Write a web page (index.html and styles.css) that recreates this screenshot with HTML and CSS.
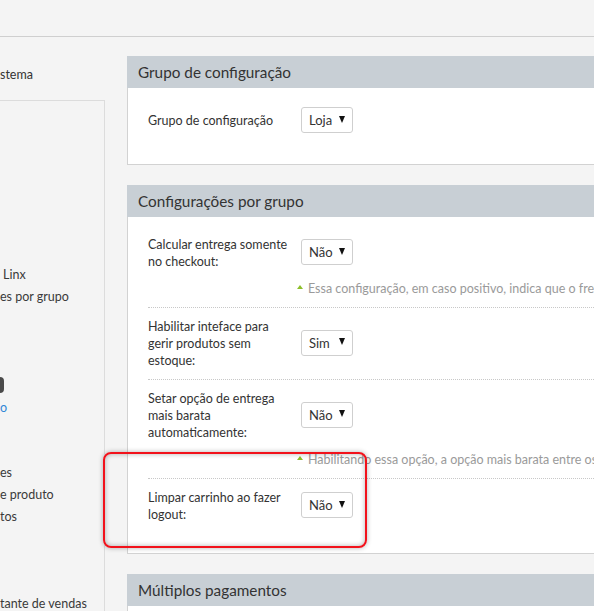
FILE: index.html
```html
<!DOCTYPE html>
<html lang="pt-BR">
<head>
<meta charset="utf-8">
<title>Configurações por grupo</title>
<link rel="stylesheet" href="styles.css">
</head>
<body>
<div class="topbar"></div>
<div class="layout">
  <aside class="side">
    <div class="side-title">stema</div>
    <div class="side-box">
      <div class="side-item i-linx">Linx</div>
      <div class="side-item">es por grupo</div>
      <div class="side-pill"></div>
      <div class="side-item side-link">o</div>
      <div class="side-item i-es">es</div>
      <div class="side-item">e produto</div>
      <div class="side-item">tos</div>
      <div class="side-item i-vendas">tante de vendas</div>
    </div>
  </aside>
  <main class="main">
    <section class="panel">
      <div class="panel-head">Grupo de configuração</div>
      <div class="panel-body single">
        <div class="label">Grupo de configuração</div>
        <div class="select"><span>Loja</span><span class="caret"></span></div>
      </div>
    </section>

    <section class="panel">
      <div class="panel-head">Configurações por grupo</div>
      <div class="panel-body rows">
        <div class="row">
          <div class="row-main">
            <div class="label">Calcular entrega somente no checkout:</div>
            <div class="select"><span>Não</span><span class="caret"></span></div>
          </div>
          <div class="hint"><span class="tri"></span>Essa configuração, em caso positivo, indica que o frete só será calculado no checkout.</div>
        </div>
        <div class="row">
          <div class="row-main">
            <div class="label">Habilitar inteface para gerir produtos sem estoque:</div>
            <div class="select"><span>Sim</span><span class="caret"></span></div>
          </div>
        </div>
        <div class="row">
          <div class="row-main">
            <div class="label">Setar opção de entrega mais barata automaticamente:</div>
            <div class="select"><span>Não</span><span class="caret"></span></div>
          </div>
          <div class="hint"><span class="tri"></span>Habilitando essa opção, a opção mais barata entre os fretes será selecionada.</div>
        </div>
        <div class="row">
          <div class="row-main">
            <div class="label">Limpar carrinho ao fazer logout:</div>
            <div class="select"><span>Não</span><span class="caret"></span></div>
          </div>
        </div>
      </div>
    </section>

    <section class="panel">
      <div class="panel-head">Múltiplos pagamentos</div>
      <div class="panel-body empty"></div>
    </section>
  </main>
</div>
<div class="highlight"></div>
</body>
</html>
```
FILE: styles.css
```css
html, body {
  margin: 0;
  padding: 0;
  overflow: hidden;
  background: #f4f4f4;
}
body {
  font-family: Lato, "Liberation Sans", sans-serif;
  font-size: 12.5px;
  color: #333;
  position: relative;
  height: 611px;
}
.topbar {
  height: 36px;
  border-bottom: 1px solid #cfcfcf;
}
.layout {
  display: flex;
  align-items: flex-start;
}
.side {
  width: 105px;
  flex: none;
}
.side-title {
  margin-top: 29px;
  line-height: 18px;
  margin-bottom: 16px;
  color: #333;
}
.side-box {
  width: 104px;
  height: 520px;
  border-top: 1px solid #dcdcdc;
  border-right: 1px solid #dcdcdc;
}
.side-item {
  line-height: 22px;
  white-space: nowrap;
  color: #3a3a3a;
}
.i-linx {
  margin-top: 163px;
  padding-left: 3px;
}
.side-pill {
  margin-top: 69px;
  width: 4px;
  height: 16px;
  background: #4a4a4a;
  border-radius: 0 4px 4px 0;
}
.side-link {
  margin-top: 4px;
  color: #2f86d6;
}
.i-es {
  margin-top: 43px;
}
.i-vendas {
  margin-top: 65px;
}
.main {
  margin-left: 22px;
  width: 620px;
  flex: none;
}
.panel {
  margin-top: 20px;
}
.panel:first-child {
  margin-top: 19px;
}
.panel-head {
  height: 32px;
  line-height: 32px;
  background: #c8cfd5;
  padding-left: 11px;
  font-size: 15.3px;
  color: #333;
}
.panel-body {
  background: #fff;
  border: 1px solid #d2d2d2;
  border-top: none;
}
.panel-body.single {
  display: flex;
  align-items: center;
  padding: 19px 20px 31px 20px;
}
.panel-body.single .select {
  margin-top: 0;
}
.panel-body.rows {
  padding: 9px 0 20px 20px;
}
.panel-body.empty {
  height: 40px;
}
.row {
  padding: 10px 0;
  border-bottom: 1px dotted #c8c8c8;
}
.row:last-child {
  border-bottom: none;
}
.row-main {
  display: flex;
  align-items: center;
}
.label {
  width: 145px;
  margin-right: 8px;
  line-height: 17px;
  flex: none;
}
.select {
  box-sizing: border-box;
  width: 52px;
  height: 26px;
  border: 1px solid #cfcfcf;
  border-radius: 3px;
  background: #fff;
  display: flex;
  align-items: center;
  justify-content: space-between;
  padding: 0 7px 0 7px;
  margin-top: -2px;
  color: #333;
  font-size: 13px;
}
.caret {
  width: 0;
  height: 0;
  border-left: 3.5px solid transparent;
  border-right: 3.5px solid transparent;
  border-top: 7px solid #111;
  margin-top: -2px;
}
.hint {
  margin-top: 10px;
  margin-left: 149px;
  line-height: 17px;
  color: #9a9a9a;
  white-space: nowrap;
  display: flex;
  align-items: center;
}
.tri {
  width: 0;
  height: 0;
  border-left: 3.5px solid transparent;
  border-right: 3.5px solid transparent;
  border-bottom: 4px solid #8dbf2a;
  margin-right: 5px;
  margin-top: -4px;
}
.highlight {
  position: absolute;
  left: 103px;
  top: 452px;
  width: 264px;
  height: 96px;
  box-sizing: border-box;
  border: 2px solid #f2121b;
  border-radius: 8px;
  box-shadow: 0 0 5px rgba(0, 0, 0, 0.3), inset 0 0 5px rgba(0, 0, 0, 0.3);
  pointer-events: none;
}
```
